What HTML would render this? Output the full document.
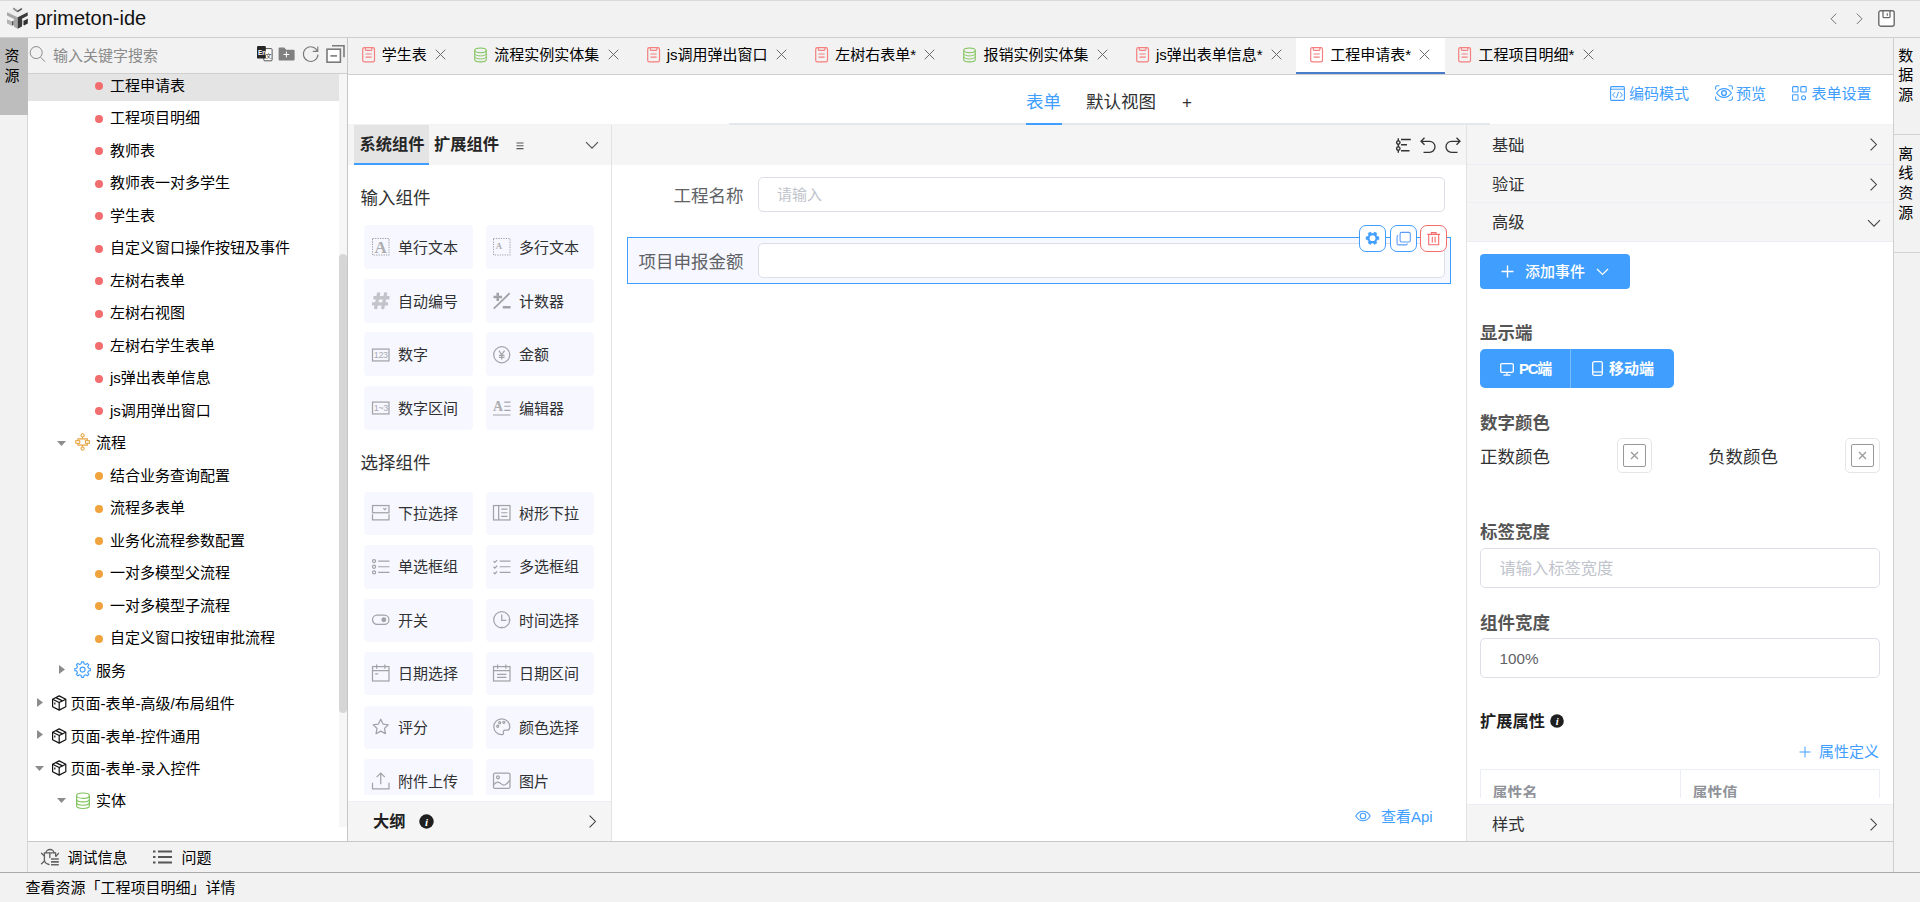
<!DOCTYPE html>
<html lang="zh-CN"><head><meta charset="utf-8"><title>primeton-ide</title>
<style>
*{box-sizing:border-box}
html,body{margin:0;padding:0}
body{width:1920px;height:902px;overflow:hidden;background:#f2f2f2;position:relative;
 font-family:"Liberation Sans","Noto Sans CJK SC",sans-serif;font-size:15px;color:#000}
.abs{position:absolute}
svg{display:block;overflow:visible}
#title{left:0;top:0;width:1920px;height:38px;border-top:1px solid #d9dadb;border-bottom:1px solid #cfcfcf;background:#f2f2f2}
#title .name{left:35px;top:0;font-size:20px;line-height:35px;color:#111}
#lstrip{left:0;top:38px;width:28px;height:835px;border-right:1px solid #d6d6d6;background:#f2f2f2}
#lstrip .tab{left:0;top:0;width:28px;height:77px;background:#bdbdbd;text-align:center;font-size:15px;line-height:20px;padding-top:7.5px;padding-right:4px}
#lpanel{left:28px;top:38px;width:320px;height:804px;background:#fff;border-right:1px solid #c6c6c6}
#search{left:0;top:0;width:319px;height:36px;background:#f2f2f2;border-bottom:1px solid #cfcfcf}
#search .ph{left:25px;top:0;line-height:35px;color:#8a8a8a;font-size:15px}
#tree{left:0;top:36px;width:311px;height:767px;overflow:hidden;background:#fff}
#tree .inner{margin-top:-5.25px}
.row{height:32.5px;line-height:32.5px;position:relative;white-space:nowrap;font-size:15px}
.row.sel{background:#e4e4e4}
.row .t{position:absolute;top:1px}
.row .ic{position:absolute}
.dot{position:absolute;width:8px;height:8px;border-radius:50%;top:13.25px}
#sbar{left:311px;top:36px;width:8px;height:753px;background:#f6f6f6}
#sbar .thumb{left:0;top:180px;width:8px;height:459px;border-radius:4px;background:#d6d6d6}
#etabs{left:348px;top:38px;width:1545px;height:37px;background:#f2f2f2;border-bottom:1px solid #cfcfcf;display:flex}
.etab{height:36px;padding:0 12.5px 2px;display:flex;align-items:center;white-space:nowrap;font-size:15px;line-height:34px;position:relative}
.etab .i{width:15px;margin-right:6.25px;flex:none}
.etab .x{width:15px;margin-left:6.25px;flex:none;margin-top:-1px}
.etab.act{background:#fff}
.etab.act:after{content:"";position:absolute;left:0;right:0;bottom:0;height:2px;background:#4a7dc9}
#ftool{left:348px;top:75px;width:1545px;height:50px;background:#fff}
#ftool .line{left:0;top:48.5px;width:1545px;height:1.5px;background:#f3f1f2}
#ftool .line2{left:381px;top:48px;width:761px;height:2.5px;background:#e4e7ed}
#ftool .tb{top:2px;font-size:17.5px;line-height:50px;color:#303133}
#ftool .lnk{top:0.5px;font-size:15px;line-height:36px;color:#409eff}
#cpanel{left:348px;top:125px;width:264px;height:717px;background:#fff;border-right:1px solid #e2e2e2;overflow:hidden}
#cpanel .hd{left:0;top:0;width:263px;height:40px;background:#f5f5f5}
#cpanel .hd .t1{left:6px;top:0;width:75px;height:40px;background:#e4e4e4;border-bottom:2px solid #409eff}
.cph{font-size:16.25px;font-weight:bold;color:#262626;line-height:38px}
.sec{position:absolute;left:12.5px;font-size:17.5px;color:#303133;line-height:30px}
.card{position:absolute;width:109px;height:43.5px;background:#f6f7ff;border-radius:4px;font-size:15px;line-height:46.5px;color:#303133}
.card.c2{width:108px}
.card.c2 .ci{left:7px}
.card.c2 .ct{left:33px}
.card .ci{position:absolute;left:8px;top:13px;width:17.5px;height:17.5px}
.card .ct{position:absolute;left:34px;top:0}
#outline{left:0;top:676px;width:263px;height:40px;background:#f5f5f5;border-top:1px solid #ebeef5}
#canvas{left:612px;top:125px;width:855px;height:717px;background:#fff;border-right:1px solid #e2e2e2}
#canvas .tbar{left:0;top:0;width:854px;height:40px;background:#f5f5f5}
.inp{position:absolute;border:1px solid #dcdfe6;border-radius:5px;background:#fff}
.flabel{position:absolute;font-size:17.5px;color:#606266;text-align:right;white-space:nowrap}
.abtn{position:absolute;width:27px;height:27px;border-radius:7px;background:#fff;border:1px solid #409eff}
#rpanel{left:1467px;top:125px;width:426px;height:717px;background:#fff;overflow:hidden}
.chd{position:absolute;left:0;width:426px;height:38.75px;background:#f5f5f5;border-bottom:1px solid #ebeef5;font-size:16.25px;color:#303133;line-height:38.75px;padding-left:25px}
.h4{position:absolute;left:13px;font-size:17.5px;font-weight:bold;color:#555;line-height:24px;white-space:nowrap}
#rstrip{left:1893px;top:38px;width:27px;height:835px;border-left:1px solid #cfcfcf;background:#f2f2f2}
#rstrip .v{left:0;width:23.5px;text-align:center;font-size:15px;line-height:19.75px}
#rstrip .sep{left:0;width:26px;height:1px;background:#d2d2d2}
#dbar{left:28px;top:841px;width:1865px;height:32px;border-top:1px solid #c8c8c8;background:#f2f2f2;font-size:15px;line-height:31px}
#status{left:0;top:872px;width:1920px;height:30px;border-top:1px solid #a9a9a9;background:#f2f2f2;font-size:15px;line-height:29px}
</style></head><body>
<div id="title" class="abs"><div class="abs" style="left:0;top:-1px"><svg class="" width="34" height="34" viewBox="0 0 34 34" style=""><path d="M7 12.200L17.700 7 27.700 12.200 17.700 17.300z" fill="#ededed"/><path d="M13.200 8.300L17.600 11.500" stroke="#8c8c8c" stroke-width="1.700" fill="none"/><path d="M17.400 11.600L21.900 8.600" stroke="#555" stroke-width="1.700" fill="none"/><path d="M7 12.200L17.700 17.300V28.700L14 26.700V18.900L7 15.600z" fill="#a6a6a6"/><path d="M17.700 17.300L27.700 12.200V15.800L22 18.700V26.500L17.700 28.700z" fill="#3b3b3b"/><path d="M7 19L12 21.300V25.800L7 23.400z" fill="#b4b4b4"/><path d="M12 21.300L13.600 20.500V25L12 25.800z" fill="#555"/><path d="M7 19L8.600 18.200 13.600 20.500 12 21.300z" fill="#f6f6f6"/><path d="M24 20.600L27.800 18.600V23.400L24 25.500z" fill="#2e2e2e"/><path d="M22.600 19.900L24 20.600V25.500L22.600 24.800z" fill="#8a8a8a"/><path d="M22.600 19.900L26.400 17.900 27.800 18.600 24 20.600z" fill="#ececec"/></svg></div><div class="abs name">primeton-ide</div><div class="abs" style="left:1829.500px;top:12.200px"><svg class="" width="7.1" height="11.6" viewBox="0 0 8 13" style=""><path d="M7 0.700L1.200 6.500 7 12.300" fill="none" stroke="#6e6e6e" stroke-width="1.1"/></svg></div><div class="abs" style="left:1855.500px;top:12.200px"><svg class="" width="7.1" height="11.6" viewBox="0 0 8 13" style=""><path d="M1 0.700L6.800 6.500 1 12.300" fill="none" stroke="#6e6e6e" stroke-width="1.1"/></svg></div><div class="abs" style="left:1878px;top:9px"><svg class="" width="17" height="17" viewBox="0 0 17 17" style=""><rect x="0.800" y="0.800" width="15.400" height="15.400" rx="2" fill="#fff" stroke="#6a6a6a" stroke-width="1.400"/><path d="M5 1v5.500a1.200 1.200 0 0 0 1.200 1.200h4.600a1.200 1.200 0 0 0 1.200-1.200V1" fill="none" stroke="#6a6a6a" stroke-width="1.300"/><path d="M9.300 3.200v2.600" stroke="#6a6a6a" stroke-width="1.200"/></svg></div></div>
<div id="lstrip" class="abs"><div class="abs tab">资<br>源</div></div>
<div id="lpanel" class="abs"><div id="search" class="abs"><div class="abs" style="left:0.500px;top:6.700px"><svg class="" width="17" height="18" viewBox="0 0 17 18" style=""><circle cx="7.200" cy="7.600" r="6" fill="none" stroke="#8a8a8a" stroke-width="1"/><path d="M11.600 12.200l4.400 4.600" stroke="#8a8a8a" stroke-width="1"/></svg></div><div class="abs ph">输入关键字搜索</div><div class="abs" style="left:229px;top:8px"><svg class="" width="16" height="16" viewBox="0 0 16 16" style=""><rect x="6.800" y="2.600" width="8.300" height="12.200" rx="1" fill="#fff" stroke="#444" stroke-width="0.900"/><rect x="0" y="0" width="8.800" height="12.600" rx="1.200" fill="#262626"/><text x="1" y="8.600" font-size="6.500" font-family="Liberation Sans, sans-serif" fill="#fff" font-weight="bold">En</text><text x="8.400" y="11.600" font-size="6" font-family="Noto Sans CJK SC, sans-serif" fill="#333">文</text></svg></div><div class="abs" style="left:250px;top:9px"><svg class="" width="17" height="14" viewBox="0 0 17 14" style=""><path d="M0.600 1.600a1 1 0 0 1 1-1h4.600l2 2.200h7.400a1 1 0 0 1 1 1v8.600a1 1 0 0 1-1 1H1.600a1 1 0 0 1-1-1z" fill="#808080"/><path d="M8.400 4.600v5.800M5.500 7.500h5.800" stroke="#fff" stroke-width="1"/></svg></div><div class="abs" style="left:274px;top:7px"><svg class="" width="18" height="18" viewBox="0 0 18 18" style=""><path d="M15.400 6.200A7.300 7.300 0 1 0 16 9.600" fill="none" stroke="#7a7a7a" stroke-width="1.100"/><path d="M15.800 1.400v5h-5" fill="none" stroke="#7a7a7a" stroke-width="1.100"/></svg></div><div class="abs" style="left:298px;top:6px"><svg class="" width="19" height="19" viewBox="0 0 19 19" style=""><path d="M6 1.800h12v11.400" fill="none" stroke="#7a7a7a" stroke-width="1.600"/><rect x="1" y="5.200" width="13.400" height="13" fill="#fff" stroke="#7a7a7a" stroke-width="1.600"/><path d="M4.400 11.900h6.600" stroke="#7a7a7a" stroke-width="1.600"/></svg></div></div><div id="tree" class="abs"><div class="inner"><div class="row sel"><span class="dot" style="left:66.750px;background:#f26d6d"></span><span class="t" style="left:82px">工程申请表</span></div><div class="row"><span class="dot" style="left:66.750px;background:#f26d6d"></span><span class="t" style="left:82px">工程项目明细</span></div><div class="row"><span class="dot" style="left:66.750px;background:#f26d6d"></span><span class="t" style="left:82px">教师表</span></div><div class="row"><span class="dot" style="left:66.750px;background:#f26d6d"></span><span class="t" style="left:82px">教师表一对多学生</span></div><div class="row"><span class="dot" style="left:66.750px;background:#f26d6d"></span><span class="t" style="left:82px">学生表</span></div><div class="row"><span class="dot" style="left:66.750px;background:#f26d6d"></span><span class="t" style="left:82px">自定义窗口操作按钮及事件</span></div><div class="row"><span class="dot" style="left:66.750px;background:#f26d6d"></span><span class="t" style="left:82px">左树右表单</span></div><div class="row"><span class="dot" style="left:66.750px;background:#f26d6d"></span><span class="t" style="left:82px">左树右视图</span></div><div class="row"><span class="dot" style="left:66.750px;background:#f26d6d"></span><span class="t" style="left:82px">左树右学生表单</span></div><div class="row"><span class="dot" style="left:66.750px;background:#f26d6d"></span><span class="t" style="left:82px">js弹出表单信息</span></div><div class="row"><span class="dot" style="left:66.750px;background:#f26d6d"></span><span class="t" style="left:82px">js调用弹出窗口</span></div><div class="row"><span class="ic" style="left:28.5px;top:14.5px"><svg class="" width="9" height="5" viewBox="0 0 9 5" style=""><path d="M0 0h9L4.5 5z" fill="#8c8c8c"/></svg></span><span class="ic" style="left:47.0px;top:7.2px"><svg class="" width="15.2" height="18" viewBox="0 0 16 19" style=""><g fill="none" stroke="#e6a23c" stroke-width="1.1"><circle cx="8" cy="2.6" r="1.7"/><circle cx="8" cy="16.4" r="1.7"/><path d="M8 4.3v1.9M8 12.8v1.9"/><path d="M3 8.2V6.2h10v2M3 10.8v2h10v-2"/><rect x="0.8" y="8.1" width="4.2" height="2.8"/><rect x="11" y="8.1" width="4.2" height="2.8"/></g></svg></span><span class="t" style="left:68.0px">流程</span></div><div class="row"><span class="dot" style="left:66.750px;background:#f0a23c"></span><span class="t" style="left:82px">结合业务查询配置</span></div><div class="row"><span class="dot" style="left:66.750px;background:#f0a23c"></span><span class="t" style="left:82px">流程多表单</span></div><div class="row"><span class="dot" style="left:66.750px;background:#f0a23c"></span><span class="t" style="left:82px">业务化流程参数配置</span></div><div class="row"><span class="dot" style="left:66.750px;background:#f0a23c"></span><span class="t" style="left:82px">一对多模型父流程</span></div><div class="row"><span class="dot" style="left:66.750px;background:#f0a23c"></span><span class="t" style="left:82px">一对多模型子流程</span></div><div class="row"><span class="dot" style="left:66.750px;background:#f0a23c"></span><span class="t" style="left:82px">自定义窗口按钮审批流程</span></div><div class="row"><span class="ic" style="left:31.0px;top:11.5px"><svg class="" width="6" height="9" viewBox="0 0 6 9" style=""><path d="M0 0v9L6 4.5z" fill="#8c8c8c"/></svg></span><span class="ic" style="left:46.0px;top:7.2px"><svg class="" width="17.2" height="17.2" viewBox="0 0 18 18" style=""><path d="M7.53 2.87 L7.91 0.87 L10.09 0.87 L10.47 2.87 L12.29 3.63 L13.97 2.48 L15.52 4.03 L14.37 5.71 L15.13 7.53 L17.13 7.91 L17.13 10.09 L15.13 10.47 L14.37 12.29 L15.52 13.97 L13.97 15.52 L12.29 14.37 L10.47 15.13 L10.09 17.13 L7.91 17.13 L7.53 15.13 L5.71 14.37 L4.03 15.52 L2.48 13.97 L3.63 12.29 L2.87 10.47 L0.87 10.09 L0.87 7.91 L2.87 7.53 L3.63 5.71 L2.48 4.03 L4.03 2.48 L5.71 3.63Z" fill="none" stroke="#409eff" stroke-width="1.2" stroke-linejoin="round"/><circle cx="9" cy="9" r="2.6" fill="none" stroke="#409eff" stroke-width="1.2"/></svg></span><span class="t" style="left:68.0px">服务</span></div><div class="row"><span class="ic" style="left:8.5px;top:11.5px"><svg class="" width="6" height="9" viewBox="0 0 6 9" style=""><path d="M0 0v9L6 4.5z" fill="#8c8c8c"/></svg></span><span class="ic" style="left:22.7px;top:9px"><svg class="" width="16.4" height="16" viewBox="0 0 16 16" style=""><g fill="none" stroke="#111" stroke-width="1.2" stroke-linejoin="round"><path d="M8 0.9l6.6 3.3v7.6L8 15.1 1.4 11.8V4.2z"/><path d="M1.4 4.2L8 7.5l6.6-3.3M8 7.5v7.6"/><path d="M4.7 2.6l6.6 3.3M3.6 7.4v2"/></g></svg></span><span class="t" style="left:42.5px;top:2px">页面-表单-高级/布局组件</span></div><div class="row"><span class="ic" style="left:8.5px;top:11.5px"><svg class="" width="6" height="9" viewBox="0 0 6 9" style=""><path d="M0 0v9L6 4.5z" fill="#8c8c8c"/></svg></span><span class="ic" style="left:22.7px;top:9px"><svg class="" width="16.4" height="16" viewBox="0 0 16 16" style=""><g fill="none" stroke="#111" stroke-width="1.2" stroke-linejoin="round"><path d="M8 0.9l6.6 3.3v7.6L8 15.1 1.4 11.8V4.2z"/><path d="M1.4 4.2L8 7.5l6.6-3.3M8 7.5v7.6"/><path d="M4.7 2.6l6.6 3.3M3.6 7.4v2"/></g></svg></span><span class="t" style="left:42.5px;top:2px">页面-表单-控件通用</span></div><div class="row"><span class="ic" style="left:7px;top:14.5px"><svg class="" width="9" height="5" viewBox="0 0 9 5" style=""><path d="M0 0h9L4.5 5z" fill="#8c8c8c"/></svg></span><span class="ic" style="left:22.7px;top:9px"><svg class="" width="16.4" height="16" viewBox="0 0 16 16" style=""><g fill="none" stroke="#111" stroke-width="1.2" stroke-linejoin="round"><path d="M8 0.9l6.6 3.3v7.6L8 15.1 1.4 11.8V4.2z"/><path d="M1.4 4.2L8 7.5l6.6-3.3M8 7.5v7.6"/><path d="M4.7 2.6l6.6 3.3M3.6 7.4v2"/></g></svg></span><span class="t" style="left:42.5px;top:2px">页面-表单-录入控件</span></div><div class="row"><span class="ic" style="left:28.5px;top:14.5px"><svg class="" width="9" height="5" viewBox="0 0 9 5" style=""><path d="M0 0h9L4.5 5z" fill="#8c8c8c"/></svg></span><span class="ic" style="left:46.5px;top:8px"><svg class="" width="16" height="17.5" viewBox="0 0 15 17" style=""><ellipse cx="7.5" cy="3.6" rx="6.2" ry="2.6" fill="none" stroke="#7fc35c" stroke-width="1.1"/><path d="M1.3 3.6v9.8c0 1.45 2.8 2.6 6.2 2.6s6.2-1.15 6.2-2.6V3.6" fill="none" stroke="#7fc35c" stroke-width="1.1"/><path d="M1.3 7c0 1.45 2.8 2.6 6.2 2.6s6.2-1.15 6.2-2.6M1.3 10.3c0 1.45 2.8 2.6 6.2 2.6s6.2-1.15 6.2-2.6" fill="none" stroke="#7fc35c" stroke-width="1"/></svg></span><span class="t" style="left:68.0px">实体</span></div></div></div><div id="sbar" class="abs"><div class="abs thumb"></div></div></div>
<div id="etabs" class="abs"><div class="etab"><span class="i"><svg class="" width="15" height="16" viewBox="0 0 15 16" style=""><rect x="1.7" y="0.7" width="11.8" height="14.1" rx="1.6" fill="none" stroke="#f67f7f" stroke-width="1.2"/><path d="M4.3 0.9v1.7a.8.8 0 0 0 .8.8h5a.8.8 0 0 0 .8-.8V0.9" fill="none" stroke="#f67f7f" stroke-width="1.15"/><path d="M4.5 7h6.2M4.5 10.2h6.2" stroke="#f67f7f" stroke-width="1.2" fill="none"/></svg></span><span>学生表</span><span class="x"><svg class="" width="15" height="15" viewBox="0 0 15 15" style=""><path d="M2.7 2.7l9.6 9.6M12.3 2.7l-9.6 9.6" stroke="#6b6b6b" stroke-width="1" fill="none"/></svg></span></div><div class="etab"><span class="i" style=margin-top:-1.2px><svg class="" width="15" height="15.8" viewBox="0 0 15 17" style=""><ellipse cx="7.5" cy="3.6" rx="6.2" ry="2.6" fill="none" stroke="#7fc35c" stroke-width="1.1"/><path d="M1.3 3.6v9.8c0 1.45 2.8 2.6 6.2 2.6s6.2-1.15 6.2-2.6V3.6" fill="none" stroke="#7fc35c" stroke-width="1.1"/><path d="M1.3 7c0 1.45 2.8 2.6 6.2 2.6s6.2-1.15 6.2-2.6M1.3 10.3c0 1.45 2.8 2.6 6.2 2.6s6.2-1.15 6.2-2.6" fill="none" stroke="#7fc35c" stroke-width="1"/></svg></span><span>流程实例实体集</span><span class="x"><svg class="" width="15" height="15" viewBox="0 0 15 15" style=""><path d="M2.7 2.7l9.6 9.6M12.3 2.7l-9.6 9.6" stroke="#6b6b6b" stroke-width="1" fill="none"/></svg></span></div><div class="etab"><span class="i"><svg class="" width="15" height="16" viewBox="0 0 15 16" style=""><rect x="1.7" y="0.7" width="11.8" height="14.1" rx="1.6" fill="none" stroke="#f67f7f" stroke-width="1.2"/><path d="M4.3 0.9v1.7a.8.8 0 0 0 .8.8h5a.8.8 0 0 0 .8-.8V0.9" fill="none" stroke="#f67f7f" stroke-width="1.15"/><path d="M4.5 7h6.2M4.5 10.2h6.2" stroke="#f67f7f" stroke-width="1.2" fill="none"/></svg></span><span>js调用弹出窗口</span><span class="x"><svg class="" width="15" height="15" viewBox="0 0 15 15" style=""><path d="M2.7 2.7l9.6 9.6M12.3 2.7l-9.6 9.6" stroke="#6b6b6b" stroke-width="1" fill="none"/></svg></span></div><div class="etab"><span class="i"><svg class="" width="15" height="16" viewBox="0 0 15 16" style=""><rect x="1.7" y="0.7" width="11.8" height="14.1" rx="1.6" fill="none" stroke="#f67f7f" stroke-width="1.2"/><path d="M4.3 0.9v1.7a.8.8 0 0 0 .8.8h5a.8.8 0 0 0 .8-.8V0.9" fill="none" stroke="#f67f7f" stroke-width="1.15"/><path d="M4.5 7h6.2M4.5 10.2h6.2" stroke="#f67f7f" stroke-width="1.2" fill="none"/></svg></span><span>左树右表单*</span><span class="x"><svg class="" width="15" height="15" viewBox="0 0 15 15" style=""><path d="M2.7 2.7l9.6 9.6M12.3 2.7l-9.6 9.6" stroke="#6b6b6b" stroke-width="1" fill="none"/></svg></span></div><div class="etab"><span class="i" style=margin-top:-1.2px><svg class="" width="15" height="15.8" viewBox="0 0 15 17" style=""><ellipse cx="7.5" cy="3.6" rx="6.2" ry="2.6" fill="none" stroke="#7fc35c" stroke-width="1.1"/><path d="M1.3 3.6v9.8c0 1.45 2.8 2.6 6.2 2.6s6.2-1.15 6.2-2.6V3.6" fill="none" stroke="#7fc35c" stroke-width="1.1"/><path d="M1.3 7c0 1.45 2.8 2.6 6.2 2.6s6.2-1.15 6.2-2.6M1.3 10.3c0 1.45 2.8 2.6 6.2 2.6s6.2-1.15 6.2-2.6" fill="none" stroke="#7fc35c" stroke-width="1"/></svg></span><span>报销实例实体集</span><span class="x"><svg class="" width="15" height="15" viewBox="0 0 15 15" style=""><path d="M2.7 2.7l9.6 9.6M12.3 2.7l-9.6 9.6" stroke="#6b6b6b" stroke-width="1" fill="none"/></svg></span></div><div class="etab"><span class="i"><svg class="" width="15" height="16" viewBox="0 0 15 16" style=""><rect x="1.7" y="0.7" width="11.8" height="14.1" rx="1.6" fill="none" stroke="#f67f7f" stroke-width="1.2"/><path d="M4.3 0.9v1.7a.8.8 0 0 0 .8.8h5a.8.8 0 0 0 .8-.8V0.9" fill="none" stroke="#f67f7f" stroke-width="1.15"/><path d="M4.5 7h6.2M4.5 10.2h6.2" stroke="#f67f7f" stroke-width="1.2" fill="none"/></svg></span><span>js弹出表单信息*</span><span class="x"><svg class="" width="15" height="15" viewBox="0 0 15 15" style=""><path d="M2.7 2.7l9.6 9.6M12.3 2.7l-9.6 9.6" stroke="#6b6b6b" stroke-width="1" fill="none"/></svg></span></div><div class="etab act"><span class="i"><svg class="" width="15" height="16" viewBox="0 0 15 16" style=""><rect x="1.7" y="0.7" width="11.8" height="14.1" rx="1.6" fill="none" stroke="#f67f7f" stroke-width="1.2"/><path d="M4.3 0.9v1.7a.8.8 0 0 0 .8.8h5a.8.8 0 0 0 .8-.8V0.9" fill="none" stroke="#f67f7f" stroke-width="1.15"/><path d="M4.5 7h6.2M4.5 10.2h6.2" stroke="#f67f7f" stroke-width="1.2" fill="none"/></svg></span><span>工程申请表*</span><span class="x"><svg class="" width="15" height="15" viewBox="0 0 15 15" style=""><path d="M2.7 2.7l9.6 9.6M12.3 2.7l-9.6 9.6" stroke="#6b6b6b" stroke-width="1" fill="none"/></svg></span></div><div class="etab"><span class="i"><svg class="" width="15" height="16" viewBox="0 0 15 16" style=""><rect x="1.7" y="0.7" width="11.8" height="14.1" rx="1.6" fill="none" stroke="#f67f7f" stroke-width="1.2"/><path d="M4.3 0.9v1.7a.8.8 0 0 0 .8.8h5a.8.8 0 0 0 .8-.8V0.9" fill="none" stroke="#f67f7f" stroke-width="1.15"/><path d="M4.5 7h6.2M4.5 10.2h6.2" stroke="#f67f7f" stroke-width="1.2" fill="none"/></svg></span><span>工程项目明细*</span><span class="x"><svg class="" width="15" height="15" viewBox="0 0 15 15" style=""><path d="M2.7 2.7l9.6 9.6M12.3 2.7l-9.6 9.6" stroke="#6b6b6b" stroke-width="1" fill="none"/></svg></span></div></div>
<div id="ftool" class="abs"><div class="abs line"></div><div class="abs line2"></div><div class="abs tb" style="left:678px;color:#409eff">表单</div><div class="abs" style="left:678px;top:47.500px;width:35.500px;height:2.500px;background:#409eff"></div><div class="abs tb" style="left:738px">默认视图</div><div class="abs tb" style="left:834px;top:2.500px;font-size:17px">+</div><div class="abs" style="left:1262px;top:11px"><svg class="" width="15" height="15" viewBox="0 0 15 15" style=""><rect x="0.600" y="0.600" width="13.800" height="13.800" rx="1.200" fill="none" stroke="#409eff" stroke-width="1.100"/><path d="M0.600 3.200h13.800" stroke="#409eff" stroke-width="1"/><path d="M5 6.200L2.600 8.900l2.400 2.700M10 6.200l2.400 2.700-2.400 2.700M8.500 5.800l-2 6.200" fill="none" stroke="#409eff" stroke-width="1"/></svg></div><div class="abs lnk" style="left:1281px">编码模式</div><div class="abs" style="left:1367px;top:10px"><svg class="" width="18" height="16" viewBox="0 0 18 16" style=""><path d="M1.600 8C3.400 5 6 3.600 9 3.600S14.600 5 16.400 8C14.600 11 12 12.400 9 12.400S3.400 11 1.600 8z" fill="none" stroke="#409eff" stroke-width="1.100"/><circle cx="9" cy="8" r="2.400" fill="none" stroke="#409eff" stroke-width="1.400"/><path d="M0.600 4.600V2.400a1.600 1.600 0 0 1 1.600-1.600h2.200M13.600 0.800h2.200a1.600 1.600 0 0 1 1.600 1.600v2.200M17.400 11.400v2.200a1.600 1.600 0 0 1-1.600 1.600h-2.200M4.400 15.200H2.200a1.600 1.600 0 0 1-1.600-1.600v-2.200" fill="none" stroke="#409eff" stroke-width="1.100"/></svg></div><div class="abs lnk" style="left:1388px">预览</div><div class="abs" style="left:1443.500px;top:11px"><svg class="" width="15" height="15" viewBox="0 0 15 15" style=""><g fill="none" stroke="#409eff" stroke-width="1.100"><rect x="0.600" y="0.600" width="5.400" height="5.400" rx="0.600"/><rect x="8.800" y="0.600" width="5.400" height="5.400" rx="0.600"/><rect x="0.600" y="8.800" width="5.400" height="5.400" rx="0.600"/><circle cx="11.600" cy="11.800" r="2"/></g></svg></div><div class="abs lnk" style="left:1463.500px">表单设置</div></div>
<div id="cpanel" class="abs"><div class="abs hd"><div class="abs t1"></div><div class="abs cph" style="left:11.500px;top:0">系统组件</div><div class="abs cph" style="left:86px;top:0">扩展组件</div><div class="abs" style="left:167.500px;top:17px"><svg class="" width="9" height="8" viewBox="0 0 9 8" style=""><path d="M0.500 1h7M0.500 3.800h7M0.500 6.600h7" stroke="#555" stroke-width="1.100"/></svg></div><div class="abs" style="left:237px;top:16px"><svg class="" width="14" height="9" viewBox="0 0 14 9" style=""><path d="M1 1.200l6 6 6-6" fill="none" stroke="#555" stroke-width="1.200"/></svg></div></div><div class="sec" style="top:57.500px">输入组件</div><div class="card" style="left:16px;top:99.80px;height:44px;line-height:45.4px"><span class="ci" style="top:13.25px"><svg class="" width="17.5" height="17.5" viewBox="0 0 17 17" style=""><rect x="0.500" y="0.500" width="16" height="16" fill="none" stroke="#a2a3a6" stroke-width="1" stroke-dasharray="1.300 1.100"/><text x="8.500" y="14.400" text-anchor="middle" font-family="Liberation Serif, serif" font-weight="bold" font-size="16.500" fill="#adadb0">A</text></svg></span><span class="ct">单行文本</span></div><div class="card c2" style="left:138px;top:99.80px;height:44px;line-height:45.4px"><span class="ci" style="top:13.25px"><svg class="" width="17.5" height="17.5" viewBox="0 0 17 17" style=""><rect x="0.500" y="0.500" width="16" height="16" fill="none" stroke="#a2a3a6" stroke-width="1" stroke-dasharray="1.200 1.200"/><text x="5.800" y="10.200" text-anchor="middle" font-family="Liberation Serif, serif" font-weight="bold" font-size="8.500" fill="#adadb0">A</text></svg></span><span class="ct">多行文本</span></div><div class="card" style="left:16px;top:153.60px;height:44px;line-height:45.4px"><span class="ci" style="top:13.25px"><svg class="" width="17.5" height="17.5" viewBox="0 0 17 17" style=""><path d="M6.600 0.500L3.400 16.500M13.400 0.500L10.200 16.500" stroke="#c3c4c9" stroke-width="3.200" fill="none"/><path d="M1.400 5.600H17M0 11.600H15.600" stroke="#c3c4c9" stroke-width="3.200" fill="none"/></svg></span><span class="ct">自动编号</span></div><div class="card c2" style="left:138px;top:153.60px;height:44px;line-height:45.4px"><span class="ci" style="top:13.25px"><svg class="" width="17.5" height="17.5" viewBox="0 0 17 17" style=""><path d="M0.800 16.200L16.200 1.200" stroke="#a2a3a6" stroke-width="1.700"/><path d="M0.500 4.800h8.300M4.600 0.800v8M9.500 14.800h7.500" stroke="#a2a3a6" stroke-width="2.500"/></svg></span><span class="ct">计数器</span></div><div class="card" style="left:16px;top:207.40px;height:44px;line-height:45.4px"><span class="ci" style="top:13.25px"><svg class="" width="17.5" height="17.5" viewBox="0 0 17 17" style=""><rect x="0.500" y="3" width="16" height="11.500" fill="none" stroke="#a2a3a6" stroke-width="1.200"/><text x="8.500" y="12" text-anchor="middle" font-family="Liberation Sans, sans-serif" font-size="8.800" letter-spacing="-0.300" fill="#a9aaae">123</text></svg></span><span class="ct">数字</span></div><div class="card c2" style="left:138px;top:207.40px;height:44px;line-height:45.4px"><span class="ci" style="top:13.25px"><svg class="" width="17.5" height="17.5" viewBox="0 0 17 17" style=""><circle cx="8.500" cy="8.500" r="7.800" fill="none" stroke="#a2a3a6" stroke-width="1.200"/><path d="M5.800 4.500l2.700 4 2.700-4M8.500 8.500v4.500M5.800 9h5.400M5.800 11h5.400" fill="none" stroke="#a2a3a6" stroke-width="1.200"/></svg></span><span class="ct">金额</span></div><div class="card" style="left:16px;top:261.20px;height:44px;line-height:45.4px"><span class="ci" style="top:13.25px"><svg class="" width="17.5" height="17.5" viewBox="0 0 17 17" style=""><rect x="0.500" y="3" width="16" height="11.500" fill="none" stroke="#a2a3a6" stroke-width="1.200"/><text x="8.500" y="12" text-anchor="middle" font-family="Liberation Sans, sans-serif" font-size="8.800" letter-spacing="-0.400" fill="#a9aaae">1~3</text></svg></span><span class="ct">数字区间</span></div><div class="card c2" style="left:138px;top:261.20px;height:44px;line-height:45.4px"><span class="ci" style="top:13.25px"><svg class="" width="17.5" height="17.5" viewBox="0 0 17 17" style=""><text x="4.800" y="11.500" text-anchor="middle" font-family="Liberation Serif, serif" font-weight="bold" font-size="13.500" fill="#adadb0">A</text><path d="M11 3h6M11 7h6M11 11h6M0 15.500h17" stroke="#a2a3a6" stroke-width="1.100"/></svg></span><span class="ct">编辑器</span></div><div class="sec" style="top:323px">选择组件</div><div class="card" style="left:16px;top:367.00px;height:43.2px;line-height:43.7px"><span class="ci" style="top:12.15px"><svg class="" width="17.5" height="17.5" viewBox="0 0 17 17" style=""><rect x="0.500" y="1.500" width="16" height="7" fill="none" stroke="#a2a3a6" stroke-width="1.200"/><path d="M11 4l1.500 1.500L14 4" fill="none" stroke="#a2a3a6" stroke-width="1.200"/><path d="M0.500 10v5.500h16V10" fill="none" stroke="#a2a3a6" stroke-width="1.200"/></svg></span><span class="ct">下拉选择</span></div><div class="card c2" style="left:138px;top:367.00px;height:43.2px;line-height:43.7px"><span class="ci" style="top:12.15px"><svg class="" width="17.5" height="17.5" viewBox="0 0 17 17" style=""><rect x="0.500" y="1.500" width="16" height="14" fill="none" stroke="#a2a3a6" stroke-width="1.200"/><path d="M5.500 1.500v14M8 5h6M8 8.500h6M8 12h6" fill="none" stroke="#a2a3a6" stroke-width="1.200"/></svg></span><span class="ct">树形下拉</span></div><div class="card" style="left:16px;top:420.40px;height:43.2px;line-height:43.7px"><span class="ci" style="top:12.15px"><svg class="" width="17.5" height="17.5" viewBox="0 0 17 17" style=""><circle cx="2" cy="3" r="1.500" fill="none" stroke="#a2a3a6" stroke-width="1.200"/><circle cx="2" cy="8.500" r="1.500" fill="none" stroke="#a2a3a6" stroke-width="1.200"/><circle cx="2" cy="14" r="1.500" fill="none" stroke="#a2a3a6" stroke-width="1.200"/><path d="M6 3h11M6 8.500h11M6 14h11" fill="none" stroke="#a2a3a6" stroke-width="1.200"/></svg></span><span class="ct">单选框组</span></div><div class="card c2" style="left:138px;top:420.40px;height:43.2px;line-height:43.7px"><span class="ci" style="top:12.15px"><svg class="" width="17.5" height="17.5" viewBox="0 0 17 17" style=""><path d="M0.500 3l1.300 1.300L4 2M0.500 8.500l1.300 1.300L4 7.500M0.500 14l1.300 1.300L4 13M6.500 3h10.500M6.500 8.500h10.500M6.500 14h10.500" fill="none" stroke="#a2a3a6" stroke-width="1.200"/></svg></span><span class="ct">多选框组</span></div><div class="card" style="left:16px;top:473.80px;height:43.2px;line-height:43.7px"><span class="ci" style="top:12.15px"><svg class="" width="17.5" height="17.5" viewBox="0 0 17 17" style=""><rect x="0.500" y="4" width="16" height="9" rx="4.500" fill="none" stroke="#a2a3a6" stroke-width="1.200"/><circle cx="11.500" cy="8.500" r="2.400" fill="#a2a3a6"/></svg></span><span class="ct">开关</span></div><div class="card c2" style="left:138px;top:473.80px;height:43.2px;line-height:43.7px"><span class="ci" style="top:12.15px"><svg class="" width="17.5" height="17.5" viewBox="0 0 17 17" style=""><circle cx="8.500" cy="8.500" r="7.800" fill="none" stroke="#a2a3a6" stroke-width="1.200"/><path d="M8.500 3.500v5.500h4.500M8.500 16.300v-1.300M16.300 8.500h-1.300" fill="none" stroke="#a2a3a6" stroke-width="1.200"/></svg></span><span class="ct">时间选择</span></div><div class="card" style="left:16px;top:527.20px;height:43.2px;line-height:43.7px"><span class="ci" style="top:12.15px"><svg class="" width="17.5" height="17.5" viewBox="0 0 17 17" style=""><rect x="0.500" y="2.500" width="16" height="14" fill="none" stroke="#a2a3a6" stroke-width="1.200"/><path d="M0.500 6.500h16M4.500 0.500v4M12.500 0.500v4M3 9.500h3" fill="none" stroke="#a2a3a6" stroke-width="1.200"/></svg></span><span class="ct">日期选择</span></div><div class="card c2" style="left:138px;top:527.20px;height:43.2px;line-height:43.7px"><span class="ci" style="top:12.15px"><svg class="" width="17.5" height="17.5" viewBox="0 0 17 17" style=""><rect x="0.500" y="2.500" width="16" height="14" fill="none" stroke="#a2a3a6" stroke-width="1.200"/><path d="M0.500 6.500h16M4.500 0.500v4M12.500 0.500v4M4 10h9M4 13h9" fill="none" stroke="#a2a3a6" stroke-width="1.200"/></svg></span><span class="ct">日期区间</span></div><div class="card" style="left:16px;top:580.60px;height:43.2px;line-height:43.7px"><span class="ci" style="top:12.75px"><svg class="" width="17.5" height="17.5" viewBox="0 0 17 17" style=""><path d="M8.500 1.200l2.250 4.650 5.050 0.700-3.650 3.550 0.900 5.100-4.550-2.450-4.550 2.450 0.900-5.100L1.200 6.550l5.050-0.700z" fill="none" stroke="#a2a3a6" stroke-width="1.200" stroke-linejoin="round"/></svg></span><span class="ct">评分</span></div><div class="card c2" style="left:138px;top:580.60px;height:43.2px;line-height:43.7px"><span class="ci" style="top:12.75px"><svg class="" width="17.5" height="17.5" viewBox="0 0 17 17" style=""><path d="M8.500 0.800a7.700 7.700 0 1 0 0 15.400c1.400 0 2-0.900 1.600-2-0.500-1.400 0.300-2.500 1.800-2.500h1.800c1.600 0 2.600-1 2.600-2.900C16.300 4.200 12.800 0.800 8.500 0.800z" fill="none" stroke="#a2a3a6" stroke-width="1.200"/><circle cx="4.600" cy="8" r="1" fill="none" stroke="#a2a3a6" stroke-width="1.200"/><circle cx="6.500" cy="4.600" r="1" fill="none" stroke="#a2a3a6" stroke-width="1.200"/><circle cx="10.500" cy="4.200" r="1" fill="none" stroke="#a2a3a6" stroke-width="1.200"/></svg></span><span class="ct">颜色选择</span></div><div class="card" style="left:16px;top:634.00px;height:43.2px;line-height:45.7px"><span class="ci" style="top:13.45px"><svg class="" width="17.5" height="17.5" viewBox="0 0 17 17" style=""><path d="M8.500 12V1M4.500 5l4-4 4 4M0.500 10.500v6h16v-6" fill="none" stroke="#a2a3a6" stroke-width="1.200"/></svg></span><span class="ct">附件上传</span></div><div class="card c2" style="left:138px;top:634.00px;height:43.2px;line-height:45.7px"><span class="ci" style="top:13.45px"><svg class="" width="17.5" height="17.5" viewBox="0 0 17 17" style=""><rect x="0.500" y="1" width="16" height="15" rx="1.500" fill="none" stroke="#a2a3a6" stroke-width="1.200"/><circle cx="4.800" cy="5.200" r="1.400" fill="none" stroke="#a2a3a6" stroke-width="1.200"/><path d="M0.500 12.500c3-3.500 5-3.500 7.500-1s5 1 8.500-3.500" fill="none" stroke="#a2a3a6" stroke-width="1.200"/></svg></span><span class="ct">图片</span></div><div class="abs" style="left:0;top:670px;width:263px;height:6px;background:#fff"></div><div id="outline" class="abs"><div class="abs" style="left:25px;top:0;font-size:16.250px;font-weight:bold;line-height:39px;color:#222">大纲</div><div class="abs" style="left:70.500px;top:12px"><svg class="" width="15" height="15" viewBox="0 0 15 15" style=""><circle cx="7.500" cy="7.500" r="7.200" fill="#1f1f1f"/><text x="7.600" y="11.600" text-anchor="middle" font-family="Liberation Serif, serif" font-style="italic" font-weight="bold" font-size="11" fill="#fff">i</text></svg></div><div class="abs" style="left:240px;top:12px"><svg class="" width="9" height="15" viewBox="0 0 9 15" style=""><path d="M1.600 1.600l5.800 5.900-5.800 5.900" fill="none" stroke="#3a3a3a" stroke-width="1.050"/></svg></div></div></div>
<div id="canvas" class="abs"><div class="abs tbar"><div class="abs" style="left:783px;top:12px"><svg class="" width="17" height="17" viewBox="0 0 17 17" style=""><g fill="none" stroke="#333" stroke-width="1.400"><path d="M6 2.500h9.800M6 7.800h6M6 13.800h8.500"/><path d="M3.300 1.200v14.600"/><circle cx="3.300" cy="5.600" r="1.700" fill="#f5f5f5"/><circle cx="3.300" cy="11.600" r="1.700" fill="#f5f5f5"/></g></svg></div><div class="abs" style="left:808px;top:12px"><svg class="" width="16" height="17" viewBox="0 0 16 17" style=""><path d="M4.500 0.800L1 4.300l3.500 3.500M1 4.300h8.500a5.500 5.500 0 0 1 0 11H3.500" fill="none" stroke="#333" stroke-width="1.300"/></svg></div><div class="abs" style="left:833px;top:12px"><svg class="" width="16" height="17" viewBox="0 0 16 17" style=""><path d="M11.500 0.800L15 4.300l-3.500 3.500M15 4.300H6.500a5.500 5.500 0 0 0 0 11h6" fill="none" stroke="#333" stroke-width="1.300"/></svg></div></div><div class="flabel" style="left:0;top:53.500px;width:131.500px;line-height:35px">工程名称</div><div class="inp" style="left:146px;top:52px;width:687px;height:35px"></div><div class="abs" style="left:165px;top:52px;line-height:35px;font-size:15px;color:#c0c4cc">请输入</div><div class="abs" style="left:15px;top:112px;width:824px;height:47px;border:1px solid #409eff;background:#f6f7ff"></div><div class="flabel" style="left:0;top:119.500px;width:131.500px;line-height:35px">项目申报金额</div><div class="inp" style="left:146px;top:118px;width:687px;height:35px"></div><div class="abtn" style="left:747px;top:100px"><svg class="" width="27" height="27" viewBox="0 0 27 27" style="position:absolute;left:-1px;top:-1px"><path d="M14.35 8.48 L15.51 7.02 L17.85 8.37 L17.17 10.10 L18.02 11.57 L19.86 11.85 L19.86 14.55 L18.02 14.83 L17.17 16.30 L17.85 18.03 L15.51 19.38 L14.35 17.92 L12.65 17.92 L11.49 19.38 L9.15 18.03 L9.83 16.30 L8.98 14.83 L7.14 14.55 L7.14 11.85 L8.98 11.57 L9.83 10.10 L9.15 8.37 L11.49 7.02 L12.65 8.48Z" fill="#409eff" stroke="#409eff" stroke-width="0.600" stroke-linejoin="round"/><circle cx="13.500" cy="13.200" r="2.900" fill="#fff"/></svg></div><div class="abtn" style="left:778px;top:100px"><svg class="" width="27" height="27" viewBox="0 0 27 27" style="position:absolute;left:-1px;top:-1px"><g fill="none" stroke="#5b9dfb" stroke-width="1.100"><rect x="10.100" y="7.400" width="10.200" height="9.600" rx="1.500"/><path d="M17.300 18.400a1.500 1.500 0 0 1-1.500 1.500H8.600a1.500 1.500 0 0 1-1.500-1.500V11.800a1.500 1.500 0 0 1 1.200-1.500"/></g></svg></div><div class="abtn" style="left:808px;top:100px;border-color:#f56c6c"><svg class="" width="27" height="27" viewBox="0 0 27 27" style="position:absolute;left:-1px;top:-1px"><g fill="none" stroke="#f56c6c" stroke-width="1.100"><path d="M7.300 9.400h12.800M11.400 9.200V7.600h4.600v1.600M8.700 9.600v10.200h10V9.600M12.300 11.800v5.600M15.100 11.800v5.600"/></g></svg></div><div class="abs" style="left:743px;top:684px"><svg class="" width="16" height="14" viewBox="0 0 16 14" style=""><path d="M0.800 7C2.600 3.800 5 2.200 8 2.200S13.400 3.800 15.200 7C13.400 10.200 11 11.800 8 11.800S2.600 10.200 0.800 7z" fill="none" stroke="#409eff" stroke-width="1.100"/><circle cx="8" cy="7" r="2.800" fill="none" stroke="#409eff" stroke-width="1.100"/></svg></div><div class="abs" style="left:769px;top:677px;line-height:30px;font-size:15px;color:#409eff">查看Api</div></div>
<div id="rpanel" class="abs"><div class="chd" style="top:0px;height:39.5px;line-height:41px">基础</div><div class="abs" style="left:402px;top:12px"><svg class="" width="9" height="15" viewBox="0 0 9 15" style=""><path d="M1.600 1.600l5.800 5.900-5.800 5.900" fill="none" stroke="#3a3a3a" stroke-width="1.050"/></svg></div><div class="chd" style="top:39.5px;height:38.25px;line-height:39.5px">验证</div><div class="abs" style="left:402px;top:51.5px"><svg class="" width="9" height="15" viewBox="0 0 9 15" style=""><path d="M1.600 1.600l5.800 5.900-5.800 5.900" fill="none" stroke="#3a3a3a" stroke-width="1.050"/></svg></div><div class="chd" style="top:77.75px;height:39px;line-height:39.5px">高级</div><div class="abs" style="left:400px;top:93.75px"><svg class="" width="14" height="9" viewBox="0 0 14 9" style=""><path d="M1 1.200l6 6 6-6" fill="none" stroke="#444" stroke-width="1.100"/></svg></div><div class="abs" style="left:13px;top:129px;width:150px;height:35px;border-radius:4px;background:#409eff;color:#fff;font-size:15px;font-weight:500;line-height:35px"><div class="abs" style="left:21px;top:11px"><svg class="" width="13" height="13" viewBox="0 0 13 13" style=""><path d="M6.500 0.500v12M0.500 6.500h12" stroke="#fff" stroke-width="1.400"/></svg></div><div class="abs" style="left:45px;top:0">添加事件</div><div class="abs" style="left:116px;top:14px"><svg class="" width="13" height="8" viewBox="0 0 13 8" style=""><path d="M1 1l5.500 5.500L12 1" fill="none" stroke="#fff" stroke-width="1.200"/></svg></div></div><div class="h4" style="top:195.500px">显示端</div><div class="abs" style="left:13px;top:224px;width:194px;height:38.750px;border-radius:5px;background:#409eff;color:#fff;font-size:15px;font-weight:bold;line-height:39px"><div class="abs" style="left:89.750px;top:0;width:1px;height:38.750px;background:#79bbff"></div><div class="abs" style="left:20px;top:14px"><svg class="" width="14" height="13" viewBox="0 0 14 13" style=""><rect x="0.700" y="0.700" width="12.600" height="8.600" rx="1.200" fill="none" stroke="#fff" stroke-width="1.300"/><path d="M7 9.500v2.500M3.500 12.200h7" stroke="#fff" stroke-width="1.300"/></svg></div><div class="abs" style="left:39px;top:0"><span style="letter-spacing:-1.300px">PC</span>端</div><div class="abs" style="left:112px;top:11.500px"><svg class="" width="11" height="15" viewBox="0 0 11 15" style=""><rect x="0.700" y="0.700" width="9.600" height="13.600" rx="1.500" fill="none" stroke="#fff" stroke-width="1.300"/><path d="M0.700 11h9.600" stroke="#fff" stroke-width="1.200"/></svg></div><div class="abs" style="left:129px;top:0">移动端</div></div><div class="h4" style="top:285.500px">数字颜色</div><div class="abs" style="left:13px;top:319px;font-size:17.500px;line-height:26px;color:#303133">正数颜色</div><div class="abs" style="left:241px;top:319px;font-size:17.500px;line-height:26px;color:#303133">负数颜色</div><div class="abs" style="left:149.5px;top:313.250px;width:35px;height:35px;border:1px solid #e6e6e6;border-radius:5px;background:#fff"><div class="abs" style="left:5px;top:5px;width:23px;height:23px;border:1px solid #999;border-radius:2px"></div><div class="abs" style="left:12px;top:12px"><svg class="" width="9" height="9" viewBox="0 0 9 9" style=""><path d="M1 1l7 7M8 1L1 8" stroke="#9a9a9a" stroke-width="1.250"/></svg></div></div><div class="abs" style="left:378px;top:313.250px;width:35px;height:35px;border:1px solid #e6e6e6;border-radius:5px;background:#fff"><div class="abs" style="left:5px;top:5px;width:23px;height:23px;border:1px solid #999;border-radius:2px"></div><div class="abs" style="left:12px;top:12px"><svg class="" width="9" height="9" viewBox="0 0 9 9" style=""><path d="M1 1l7 7M8 1L1 8" stroke="#9a9a9a" stroke-width="1.250"/></svg></div></div><div class="h4" style="top:395px">标签宽度</div><div class="inp" style="left:13px;top:423px;width:400px;height:40px"></div><div class="abs" style="left:32.500px;top:423px;line-height:41px;font-size:16.250px;color:#c0c4cc">请输入标签宽度</div><div class="h4" style="top:485.500px">组件宽度</div><div class="inp" style="left:13px;top:513px;width:400px;height:40px"></div><div class="abs" style="left:32.500px;top:513px;line-height:42px;font-size:15.250px;color:#606266">100%</div><div class="abs" style="left:13px;top:584px;font-size:16.250px;font-weight:bold;line-height:24px;color:#1f1f1f">扩展属性</div><div class="abs" style="left:83px;top:589px"><svg class="" width="14" height="14" viewBox="0 0 14 14" style=""><circle cx="7" cy="7" r="6.800" fill="#1f1f1f"/><text x="7.100" y="10.800" text-anchor="middle" font-family="Liberation Serif, serif" font-style="italic" font-weight="bold" font-size="10.500" fill="#fff">i</text></svg></div><div class="abs" style="left:332px;top:621px"><svg class="" width="12" height="12" viewBox="0 0 12 12" style=""><path d="M6 0.500v11M0.500 6h11" stroke="#409eff" stroke-width="1"/></svg></div><div class="abs" style="left:352px;top:615px;font-size:15px;line-height:24px;color:#409eff">属性定义</div><div class="abs" style="left:13px;top:644px;width:400px;height:40px;border:1px solid #ebeef5;border-bottom:none;background:#fff"></div><div class="abs" style="left:213px;top:644px;width:1px;height:40px;background:#ebeef5"></div><div class="abs" style="left:25.500px;top:655.700px;font-size:15px;font-weight:bold;line-height:24px;color:#909399">属性名</div><div class="abs" style="left:225.500px;top:655.700px;font-size:15px;font-weight:bold;line-height:24px;color:#909399">属性值</div><div class="abs" style="left:0;top:673px;width:426px;height:7px;background:#fff"></div><div class="abs" style="left:0;top:679px;width:426px;height:38px;background:#f5f5f5;border-top:1px solid #ebeef5;font-size:16.250px;color:#303133;line-height:38px;padding-left:25px">样式</div><div class="abs" style="left:402px;top:692px"><svg class="" width="9" height="15" viewBox="0 0 9 15" style=""><path d="M1.600 1.600l5.800 5.900-5.800 5.900" fill="none" stroke="#3a3a3a" stroke-width="1.050"/></svg></div></div>
<div class="abs" style="left:1466px;top:125px;width:1px;height:717px;background:#e2e2e2"></div><div id="rstrip" class="abs"><div class="abs v" style="top:7.500px">数<br>据<br>源</div><div class="abs sep" style="top:96px"></div><div class="abs v" style="top:105.500px">离<br>线<br>资<br>源</div><div class="abs sep" style="top:214px"></div></div>
<div id="dbar" class="abs"><div class="abs" style="left:12px;top:7px"><svg class="" width="20" height="17" viewBox="0 0 20 17" style=""><g fill="none" stroke="#5f5f5f" stroke-width="1.300" stroke-linecap="round"><path d="M6.100 3.600A3.900 3.100 0 0 1 13.900 3.600"/><path d="M4.400 3.900H15.600"/><path d="M4.400 4.500V11.300Q4.600 14.300 9 15.500"/><path d="M9.800 4.500V8.500M15.600 4.500V7.200"/><path d="M1.500 4.300L3.900 6.500M18.500 4.300L16.200 7M1.500 14.700L4.200 12.300"/></g><path d="M11 10H18.800M11 12.900H18.800M11 15.700H18.800" stroke="#666" stroke-width="1.600" fill="none"/></svg></div><div class="abs" style="left:39.500px;top:0">调试信息</div><div class="abs" style="left:125px;top:8.300px"><svg class="" width="19" height="14" viewBox="0 0 19 14" style=""><path d="M0 1.500h2.500M5 1.500h14M0 7h2.500M5 7h14M0 12.500h2.500M5 12.500h14" stroke="#555" stroke-width="1.800"/></svg></div><div class="abs" style="left:153.500px;top:0">问题</div></div>
<div id="status" class="abs"><div class="abs" style="left:25.500px;top:0">查看资源「工程项目明细」详情</div></div>
</body></html>
